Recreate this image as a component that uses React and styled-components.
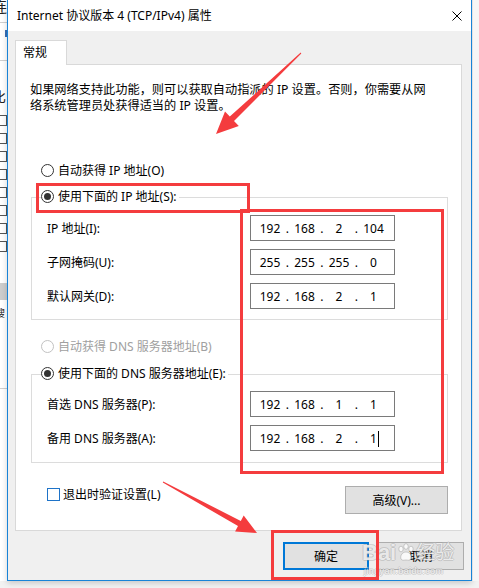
import React from 'react';
import styled, { createGlobalStyle } from 'styled-components';

const GlobalStyle = createGlobalStyle`
  html, body {
    margin: 0;
    padding: 0;
    background: #f2f2f2;
  }
  body {
    font-family: "Noto Sans", "Noto Sans CJK SC", sans-serif;
    font-size: 12px;
    color: #000;
  }
  * { box-sizing: border-box; }
`;

const RED = '#f43c3e';

const Page = styled.div`
  position: relative;
  display: flex;
  width: 479px;
  height: 588px;
  overflow: hidden;
  background: #f2f2f2;
`;

/* the window behind the dialog, only a sliver is visible */
const LeftStrip = styled.div`
  display: flex;
  flex-direction: column;
  width: 7px;
  height: 581px;
  overflow: hidden;
  background: #fff;
  flex-shrink: 0;
`;

const EdgeGlyph = styled.div`
  margin-top: ${p => p.$top}px;
  margin-left: ${p => p.$left || -8}px;
  height: ${p => p.$h}px;
  line-height: ${p => p.$h}px;
  font-size: ${p => p.$size || 15}px;
  white-space: nowrap;
  color: #222;
`;

const EdgeRule = styled.div`
  margin-top: ${p => p.$top}px;
  height: 1px;
  background: #cfcfcf;
  flex-shrink: 0;
`;

const EdgeTick = styled.div`
  margin-top: ${p => p.$top}px;
  margin-left: 5px;
  width: 2px;
  height: 7px;
  background: #3a6fb5;
  flex-shrink: 0;
`;

const EdgeBox = styled.div`
  margin-top: ${p => p.$top}px;
  margin-left: -4px;
  width: 11px;
  height: 11px;
  border: 1px solid #555;
  flex-shrink: 0;
`;

const EdgeBand = styled.div`
  margin-top: ${p => p.$top}px;
  height: 17px;
  background: #cdcdcd;
  flex-shrink: 0;
`;

const RightStrip = styled.div`
  display: flex;
  flex-direction: column;
  width: 7px;
  height: 581px;
  background: #f6f6f6;
  border-left: 1px solid #e2e2e2;
  flex-shrink: 0;
`;

const Window = styled.div`
  display: flex;
  flex-direction: column;
  width: 465px;
  height: 581px;
  flex-shrink: 0;
  border: 1px solid #1883d7;
  border-top: none;
  background: #f0f0f0;
  box-shadow: 0 2px 6px rgba(0, 0, 0, 0.18);
`;

const TitleBar = styled.div`
  display: flex;
  align-items: center;
  justify-content: space-between;
  height: 31px;
  padding: 0 9px;
  background: #fff;
`;

const Title = styled.div`
  font-size: 12px;
  line-height: 16px;
  white-space: nowrap;
`;

const Body = styled.div`
  flex: 1;
  display: flex;
  flex-direction: column;
  padding: 9px 9px 0 7px;
`;

const TabStrip = styled.div`
  display: flex;
`;

const Tab = styled.div`
  position: relative;
  z-index: 1;
  width: 52px;
  height: 25px;
  margin-bottom: -1px;
  padding-left: 7px;
  line-height: 24px;
  background: #fff;
  border: 1px solid #d9d9d9;
  border-bottom: none;
`;

const Panel = styled.div`
  display: flex;
  flex-direction: column;
  height: 467px;
  padding: 17px 14px 0 15px;
  background: #fff;
  border: 1px solid #d9d9d9;
`;

const Description = styled.div`
  margin-left: -1px;
  font-size: 12.2px;
  line-height: 16px;
  white-space: nowrap;
`;

const RadioRow = styled.div`
  display: flex;
  align-items: center;
  gap: 4px;
  width: fit-content;
  height: 16px;
  margin-top: ${p => p.$top || 0}px;
  margin-left: ${p => p.$indent}px;
  padding-right: 2px;
  background: #fff;
  color: ${p => (p.$disabled ? '#a0a0a0' : '#000')};
  white-space: nowrap;
`;

const RadioDot = styled.span`
  position: relative;
  width: 13px;
  height: 13px;
  border-radius: 50%;
  border: 1px solid ${p => (p.$disabled ? '#c2c2c2' : '#333')};
  background: #fff;
  flex-shrink: 0;

  &::after {
    content: '';
    display: ${p => (p.$checked ? 'block' : 'none')};
    position: absolute;
    left: 2px;
    top: 2px;
    width: 7px;
    height: 7px;
    border-radius: 50%;
    background: #333;
  }
`;

const Group = styled.div`
  display: flex;
  flex-direction: column;
  width: 417px;
  margin-top: ${p => p.$top}px;
  padding-bottom: ${p => p.$bottom}px;
  border: 1px solid #dcdcdc;
`;

const Legend = styled(RadioRow)`
  margin-top: -10px;
`;

const FieldGrid = styled.div`
  display: grid;
  grid-template-columns: 203px 145px;
  row-gap: 8px;
  align-items: center;
  margin-top: ${p => p.$top}px;
  padding-left: 15px;
`;

const FieldLabel = styled.span`
  white-space: nowrap;
`;

const IpBox = styled.div`
  display: flex;
  align-items: center;
  height: 26px;
  padding-left: 6px;
  border: 1px solid #7a7a7a;
  background: #fff;
`;

const IpPart = styled.span`
  display: flex;
  justify-content: center;
  width: 26px;
`;

const IpText = styled.span`
  position: relative;

  &::after {
    content: '';
    display: ${p => (p.$caret ? 'block' : 'none')};
    position: absolute;
    left: calc(100% + 1px);
    top: 1px;
    width: 1px;
    height: 16px;
    background: #000;
  }
`;

const IpDot = styled.span`
  width: 8.5px;
  text-align: center;
`;

const FooterRow = styled.div`
  display: flex;
  align-items: flex-start;
  justify-content: space-between;
  width: 417px;
  margin-top: 23px;
  padding-left: 16px;
`;

const CheckRow = styled.label`
  display: flex;
  align-items: center;
  gap: 3px;
  height: 16px;
  white-space: nowrap;
`;

const CheckBox = styled.span`
  width: 13px;
  height: 13px;
  border: 1px solid #1e73c8;
  background: #fff;
  flex-shrink: 0;
`;

const Button = styled.div`
  display: flex;
  align-items: center;
  justify-content: center;
  width: ${p => p.$w}px;
  height: ${p => p.$h || 28}px;
  background: #e1e1e1;
  border: ${p => (p.$focus ? '2px solid #0078d7' : '1px solid #adadad')};
  white-space: nowrap;
`;

const ButtonRow = styled.div`
  display: flex;
  justify-content: flex-end;
  gap: 9px;
  margin-top: 11px;
  margin-right: -2px;
`;

const Annotations = styled.svg`
  position: absolute;
  left: 0;
  top: 0;
  pointer-events: none;
`;

const Watermark = styled.div`
  position: absolute;
  left: 362px;
  top: 540px;
  display: flex;
  flex-direction: column;
  align-items: flex-start;
  pointer-events: none;
  color: rgba(255, 255, 255, 0.75);
  text-shadow:
    1px 0 rgba(150, 150, 150, 0.35),
    -1px 0 rgba(150, 150, 150, 0.35),
    0 1px rgba(150, 150, 150, 0.35),
    0 -1px rgba(150, 150, 150, 0.35);
`;

const MarkBig = styled.div`
  display: flex;
  align-items: center;
  gap: 1px;
  height: 26px;
  font-family: "Liberation Sans", "Noto Sans CJK SC", sans-serif;
  font-weight: bold;
  font-size: 22px;
  line-height: 26px;
  white-space: nowrap;
`;

const MarkCjk = styled.span`
  font-size: 19px;
  font-weight: normal;
`;

const MarkSmall = styled.div`
  margin-top: 0;
  margin-left: 2px;
  font-family: "Liberation Sans", sans-serif;
  font-size: 9px;
  line-height: 10px;
  letter-spacing: 0.4px;
  white-space: nowrap;
`;

function Radio({ checked, disabled, children, indent, top }) {
  return (
    <RadioRow $indent={indent} $top={top} $disabled={disabled}>
      <RadioDot $checked={checked} $disabled={disabled} />
      {children}
    </RadioRow>
  );
}

function IpField({ value, caret }) {
  const parts = value.split('.');
  return (
    <IpBox>
      {parts.map((p, i) => (
        <React.Fragment key={i}>
          <IpPart>
            <IpText $caret={caret && i === parts.length - 1}>{p}</IpText>
          </IpPart>
          {i < parts.length - 1 && <IpDot>.</IpDot>}
        </React.Fragment>
      ))}
    </IpBox>
  );
}

function Paw() {
  return (
    <svg width="18" height="20" viewBox="0 0 18 20">
      <g fill="rgba(255,255,255,0.8)" stroke="rgba(150,150,150,0.45)" strokeWidth="1">
        <ellipse cx="4" cy="6" rx="2.2" ry="2.8" />
        <ellipse cx="9" cy="3.5" rx="2.2" ry="2.8" />
        <ellipse cx="14" cy="6" rx="2.2" ry="2.8" />
        <path d="M9 9 C5 9 3 13 4 16 C5 18 7 17 9 17 C11 17 13 18 14 16 C15 13 13 9 9 9 Z" />
      </g>
    </svg>
  );
}

function Arrow({ points }) {
  return <polygon points={points} fill={RED} />;
}

export default function App() {
  return (
    <Page>
      <GlobalStyle />
      <LeftStrip>
        <EdgeGlyph $top={-3} $h={18}>连</EdgeGlyph>
        <EdgeRule $top={7} />
        <EdgeTick $top={7} />
        <EdgeRule $top={23} />
        <EdgeGlyph $top={28} $h={16} $size={14}>比</EdgeGlyph>
        {[10, 7, 7, 7, 7, 7, 7, 7].map((t, i) => (
          <EdgeBox key={i} $top={t} />
        ))}
        <EdgeGlyph $top={16} $h={9} $size={8} $left={0}>◀</EdgeGlyph>
        <EdgeBand $top={6} />
        <EdgeGlyph $top={8} $h={10} $size={10} $left={-5}>搜</EdgeGlyph>
        <EdgeRule $top={70} />
      </LeftStrip>

      <Window>
        <TitleBar>
          <Title>Internet 协议版本 4 (TCP/IPv4) 属性</Title>
          <svg width="10" height="10" viewBox="0 0 10 10">
            <path d="M0.5 0.5 L9.5 9.5 M9.5 0.5 L0.5 9.5" stroke="#000" strokeWidth="1" />
          </svg>
        </TitleBar>

        <Body>
          <TabStrip>
            <Tab>常规</Tab>
          </TabStrip>
          <Panel>
            <Description>
              如果网络支持此功能，则可以获取自动指派的 IP 设置。否则，你需要从网
              <br />
              络系统管理员处获得适当的 IP 设置。
            </Description>

            <Radio indent={10} top={48}>自动获得 IP 地址(O)</Radio>

            <Group $top={19} $bottom={10}>
              <Legend as="div" $indent={9}>
                <RadioDot $checked />
                使用下面的 IP 地址(S):
              </Legend>
              <FieldGrid $top={11}>
                <FieldLabel>IP 地址(I):</FieldLabel>
                <IpField value="192.168.2.104" />
                <FieldLabel>子网掩码(U):</FieldLabel>
                <IpField value="255.255.255.0" />
                <FieldLabel>默认网关(D):</FieldLabel>
                <IpField value="192.168.2.1" />
              </FieldGrid>
            </Group>

            <Radio indent={10} top={18} disabled>自动获得 DNS 服务器地址(B)</Radio>

            <Group $top={20} $bottom={11}>
              <Legend as="div" $indent={9}>
                <RadioDot $checked />
                使用下面的 DNS 服务器地址(E):
              </Legend>
              <FieldGrid $top={10}>
                <FieldLabel>首选 DNS 服务器(P):</FieldLabel>
                <IpField value="192.168.1.1" />
                <FieldLabel>备用 DNS 服务器(A):</FieldLabel>
                <IpField value="192.168.2.1" caret />
              </FieldGrid>
            </Group>

            <FooterRow>
              <CheckRow>
                <CheckBox />
                退出时验证设置(L)
              </CheckRow>
              <Button $w={103}>高级(V)...</Button>
            </FooterRow>
          </Panel>

          <ButtonRow>
            <Button $w={86} $focus>确定</Button>
            <Button $w={86}>取消</Button>
          </ButtonRow>
        </Body>
      </Window>

      <RightStrip />

      <Watermark>
        <MarkBig>
          <span>Bai</span>
          <Paw />
          <MarkCjk>经验</MarkCjk>
        </MarkBig>
        <MarkSmall>jingyan.baidu.com</MarkSmall>
      </Watermark>

      <Annotations width="479" height="588" viewBox="0 0 479 588">
        <g fill="none" stroke={RED} strokeWidth="3">
          <rect x="37.5" y="184.5" width="211" height="27" />
          <rect x="241.5" y="210.5" width="201" height="262" />
          <rect x="272.5" y="531.5" width="105" height="47" />
        </g>
        <Arrow points="300.7,52.6 229.8,116.6 225,111.6 216,134 238.8,126 234,121 301.3,53.4" />
        <Arrow points="163.2,481.6 240.8,520.9 243.7,515.6 257,533 235.1,531.4 238,526.1 162.8,482.4" />
      </Annotations>
    </Page>
  );
}
